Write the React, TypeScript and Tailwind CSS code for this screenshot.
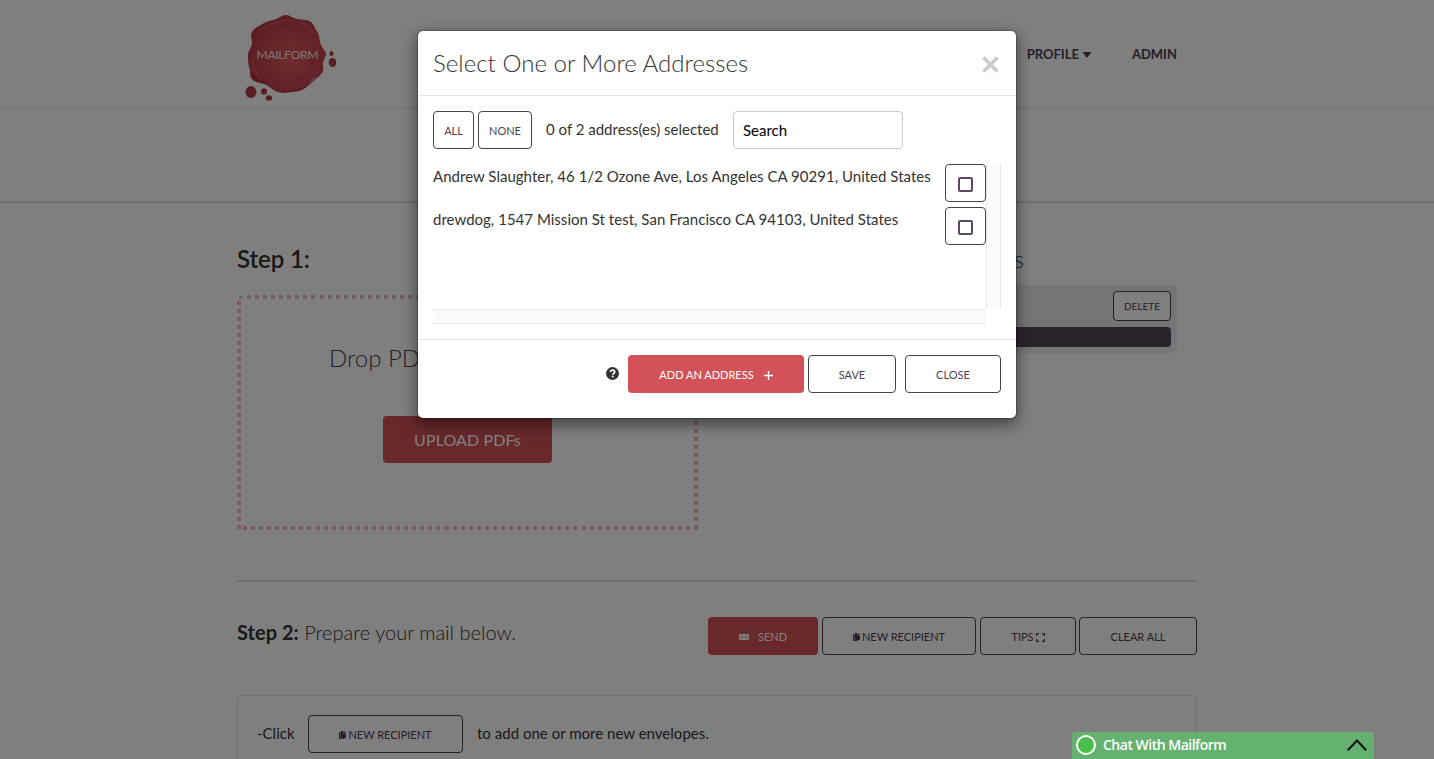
import React from "react";

const outline =
  "flex items-center justify-center rounded border border-[#4b3f52] text-[#4b3f52]";
const action = outline + " pt-[2px] text-[11px]";

function DocIcon() {
  return (
    <svg className="mr-[2px] h-2 w-[7px] shrink-0" viewBox="0 0 7 8" fill="currentColor">
      <path d="M1.700 0h2.700v2.600H7V7H1.700z" />
      <path d="M5 0l2 2H5z" />
      <path d="M0 1.200h1.300v6.100h4V8H0z" />
    </svg>
  );
}

function Seal() {
  return (
    <svg className="h-[108px] w-[110px]" viewBox="0 0 110 108">
      <defs>
        <radialGradient id="wax" cx="55%" cy="55%" r="55%">
          <stop offset="0" stopColor="#d95658" />
          <stop offset="0.75" stopColor="#c6464d" />
          <stop offset="1" stopColor="#b63a42" />
        </radialGradient>
      </defs>
      <path
        fill="url(#wax)"
        d="M49 15c4 0 6 3 11 4 6 1 11 0 15 4 3 3 3 7 6 10 2 4 1 8 3 12 1 3 5 6 5 9 0 4-3 6-3 10 0 3 1 6-1 9-3 4-7 4-10 7-3 4-6 8-10 10-5 2-9 2-13 2-4 1-8 1-12-1-5-2-7-5-11-7-5-1-12-1-15-6-2-4 0-7-2-11-1-4-1-8-1-12 0-5 4-8 4-12 0-3-2-7 0-11 3-5 8-6 12-9 6-3 12-3 16-6 2-1 3-2 6-2z"
      />
      <path
        fill="none"
        stroke="#9c2a33"
        strokeOpacity=".55"
        strokeWidth="2"
        d="M16 76c6 6 11 6 18 11 5 5 9 5 15 5 8 0 13-3 19-5 6-4 8-7 15-12"
      />
      <circle cx="50" cy="54" r="28" fill="none" stroke="#a83740" strokeOpacity=".6" strokeWidth="1" />
      <path
        fill="none"
        stroke="#e88284"
        strokeOpacity=".35"
        strokeWidth="1.5"
        d="M20 34c7-8 17-12 29-14 12 0 23 4 28 14M16 58c-1 9 2 15 7 21"
      />
      <ellipse cx="14" cy="92" rx="5.5" ry="6" fill="#b53d44" />
      <ellipse cx="27" cy="91.5" rx="3" ry="3.3" fill="#b53d44" />
      <ellipse cx="32" cy="98" rx="3.3" ry="2.7" fill="#b53d44" />
      <ellipse cx="94.5" cy="53.5" rx="2" ry="2.5" fill="#b53d44" />
      <ellipse cx="95.5" cy="62.5" rx="3.800" ry="4.500" fill="#b53d44" />
      <text
        x="50.500"
        y="59"
        textAnchor="middle"
        textLength="62"
        fontSize="12"
        fill="#f7e9e9"
        fontFamily="Lato, sans-serif"
      >
        MAILFORM
      </text>
    </svg>
  );
}

function Page() {
  return (
    <div className="flex h-[759px] flex-col overflow-hidden bg-white">
      <header className="h-[109px] shrink-0 border-b border-[#e2e2e2]">
        <div className="mx-auto flex w-[960px] justify-between">
          <Seal />
          <nav className="flex h-[108px] items-center gap-10 pt-[2px] pr-5 text-[13px] font-bold text-[#4b3f52]">
            <span className="flex items-center gap-[3px]">
              PROFILE
              <svg className="h-[6px] w-[10px]" viewBox="0 0 10 6" fill="currentColor">
                <path d="M.5 0h9L5 6z" />
              </svg>
            </span>
            <span>ADMIN</span>
          </nav>
        </div>
      </header>
      <div className="h-[94px] shrink-0 border-b-2 border-[#dcdcdc]" />
      <main className="mx-auto w-[960px] shrink-0">
        <div className="flex h-[377px] justify-between">
          <section className="w-[461px]">
            <h2 className="mt-[40px] text-2xl leading-8 font-semibold tracking-[-0.1px]">Step 1:</h2>
            <div className="mt-[20px] flex h-[235px] flex-col items-center bg-[repeating-linear-gradient(90deg,#f4b4b6_0_4px,transparent_4px_8.06px),repeating-linear-gradient(90deg,#f4b4b6_0_4px,transparent_4px_8.06px),repeating-linear-gradient(180deg,#f4b4b6_0_4px,transparent_4px_8px),repeating-linear-gradient(180deg,#f4b4b6_0_4px,transparent_4px_8px),linear-gradient(#f4b4b6,#f4b4b6),linear-gradient(#f4b4b6,#f4b4b6)] bg-[length:452px_4px,455px_4px,4px_229px,4px_229px,3px_3px,3px_3px] bg-[position:10px_0,6px_100%,0_6px,100%_6px,2px_1px,458px_1px] bg-no-repeat">
              <p className="mt-[47px] w-[277px] text-2xl leading-8 font-light whitespace-nowrap text-[#4b3f52]">
                Drop PDFs here
              </p>
              <div className="mt-[42px] flex h-[47px] w-[169px] items-center justify-center rounded bg-[#d35257] text-base tracking-[0.1px] text-white">
                UPLOAD PDFs
              </div>
            </div>
          </section>
          <section className="mr-5 w-[440px]">
            <h3 className="mt-[40px] mr-[153px] text-right text-2xl leading-8 font-light">s</h3>
            <div className="mt-[10px] flex h-[68px] flex-col items-end rounded-md bg-[#eaeaea] p-[6px]">
              <div className={outline + " h-[30px] w-[58px] bg-white text-[10px]"}>DELETE</div>
              <div className="mt-[6px] h-5 w-full rounded bg-[#534759]" />
            </div>
          </section>
        </div>
        <div className="h-0.5 bg-[#dcdcdc]" />
        <div className="mt-[35px] flex h-[38px] items-center justify-between">
          <h2 className="mt-[-8px] text-xl font-light tracking-[0.02px]">
            <b className="font-bold">Step 2:</b> Prepare your mail below.
          </h2>
          <div className="flex h-[38px]">
            <div className="flex w-[110px] items-center justify-center gap-[9px] rounded bg-[#d35257] pt-[2px] text-[11px] text-white">
              <svg className="mb-px h-[6px] w-[10px]" viewBox="0 0 10 6">
                <rect width="10" height="6" rx="1" fill="#fff" />
                <path d="M1 1.2l4 2.6 4-2.6M1 5l2.4-1.8M9 5L6.600 3.200" fill="none" stroke="#d35257" strokeWidth=".6" />
              </svg>
              SEND
            </div>
            <div className={action + " ml-1 w-[154px]"}>
              <DocIcon />
              NEW RECIPIENT
            </div>
            <div className={action + " ml-1 w-[96px]"}>
              TIPS
              <svg className="ml-[2px] size-[9px]" viewBox="0 0 9 9" fill="none" stroke="currentColor" strokeWidth="1.2">
                <path d="M.6 3V.6H3M6 .6h2.400V3M8.400 6v2.400H6M3 8.400H.6V6" />
              </svg>
            </div>
            <div className={action + " ml-[3px] w-[118px]"}>CLEAR ALL</div>
          </div>
        </div>
        <div className="mt-10 flex h-[100px] items-start rounded border border-[#e2e2e2] pt-[19px] pl-[19px] text-[15px]">
          <span className="w-[51px] leading-[36px]">-Click</span>
          <div className={action + " h-[38px] w-[155px]"}>
            <DocIcon />
            NEW RECIPIENT
          </div>
          <span className="ml-[14px] leading-[36px] tracking-[0.02px]">to add one or more new envelopes.</span>
        </div>
      </main>
    </div>
  );
}

function AddressRow({ text }: { text: string }) {
  return (
    <div className="mb-[5px] flex h-[38px] items-start justify-between">
      <span className="leading-[25px] tracking-[0.02px] whitespace-nowrap">{text}</span>
      <div className={outline + " h-[38px] w-[41px]"}>
        <span className="mt-[2px] size-[15px] rounded-[2px] border-2 border-[#5b4a60]" />
      </div>
    </div>
  );
}

function Modal() {
  return (
    <div className="h-[389px] w-[600px] rounded-md border border-black/20 bg-white bg-clip-padding shadow-[0_5px_15px_rgba(0,0,0,0.5)]">
      <div className="flex h-[65px] items-center justify-between border-b border-[#e5e5e5] px-[15px]">
        <h1 className="text-2xl font-light tracking-[0.04px]">Select One or More Addresses</h1>
        <svg className="mt-[3px] mr-[2px] size-[17px]" viewBox="0 0 17 17" stroke="#ccc" strokeWidth="3.600">
          <path d="M1.500 1.500l14 14M15.500 1.500l-14 14" />
        </svg>
      </div>
      <div className="h-[244px] border-b border-[#e5e5e5] px-[15px] pt-[15px] text-[15px]">
        <div className="flex h-[38px]">
          <div className={action + " w-[41px]"}>ALL</div>
          <div className={action + " ml-1 w-[54px]"}>NONE</div>
          <span className="ml-[14px] w-[187px] leading-[37px] whitespace-nowrap">0 of 2 address(es) selected</span>
          <div className="flex w-[170px] items-center rounded border border-[#ccc] px-[9px] text-black">Search</div>
        </div>
        <div className="mt-[15px] flex h-[145px]">
          <div className="w-[553px]">
            <AddressRow text="Andrew Slaughter, 46 1/2 Ozone Ave, Los Angeles CA 90291, United States" />
            <AddressRow text="drewdog, 1547 Mission St test, San Francisco CA 94103, United States" />
          </div>
          <div className="w-[15px] border-x border-[#e8e8e8] bg-[#fafafa]" />
        </div>
        <div className="h-[15px] w-[553px] border-y border-[#e8e8e8] bg-[#fafafa]" />
      </div>
      <div className="flex items-start justify-end px-[15px] pt-[15px]">
        <svg className="mt-[12px] mr-[9px] size-[13px]" viewBox="0 0 13 13">
          <circle cx="6.500" cy="6.500" r="6.500" fill="#333" />
          <path d="M4.500 5.100c0-2.800 4.200-2.700 4.200-.2 0 1.500-2 1.500-2 2.900" fill="none" stroke="#fff" strokeWidth="1.700" />
          <rect x="5.800" y="8.700" width="1.800" height="1.700" fill="#fff" />
        </svg>
        <div className="flex h-[38px] w-[176px] items-center justify-center rounded bg-[#d35257] pt-[2px] text-[11px] text-white">
          ADD AN ADDRESS
          <svg className="ml-[10px] size-[9px]" viewBox="0 0 9 9" stroke="#fff" strokeWidth="1.400">
            <path d="M4.500 0v9M0 4.500h9" />
          </svg>
        </div>
        <div className={action + " ml-1 h-[38px] w-[88px]"}>SAVE</div>
        <div className={action + " ml-[9px] h-[38px] w-[96px]"}>CLOSE</div>
      </div>
    </div>
  );
}

export default function App() {
  return (
    <div className="relative h-[759px] w-[1434px] overflow-hidden font-[Lato,sans-serif] text-[#333]">
      <Page />
      <div className="absolute inset-0 flex items-start justify-center bg-black/50 pt-[30px]">
        <Modal />
      </div>
      <div className="absolute right-[60px] bottom-0 flex h-[27px] w-[302px] items-center rounded-t bg-[#65b170] pr-[7px] pb-[2px] pl-1 font-['Open_Sans',sans-serif] text-sm font-semibold tracking-[-0.5px] text-white">
        <span className="mr-[7px] size-5 rounded-full border-2 border-white bg-[#4bbf4b]" />
        Chat With Mailform
        <svg className="ml-auto h-3 w-5" viewBox="0 0 20 12" fill="none" stroke="#111" strokeWidth="2">
          <path d="M.8 11.200L10 1.500l9.200 9.700" />
        </svg>
      </div>
    </div>
  );
}
